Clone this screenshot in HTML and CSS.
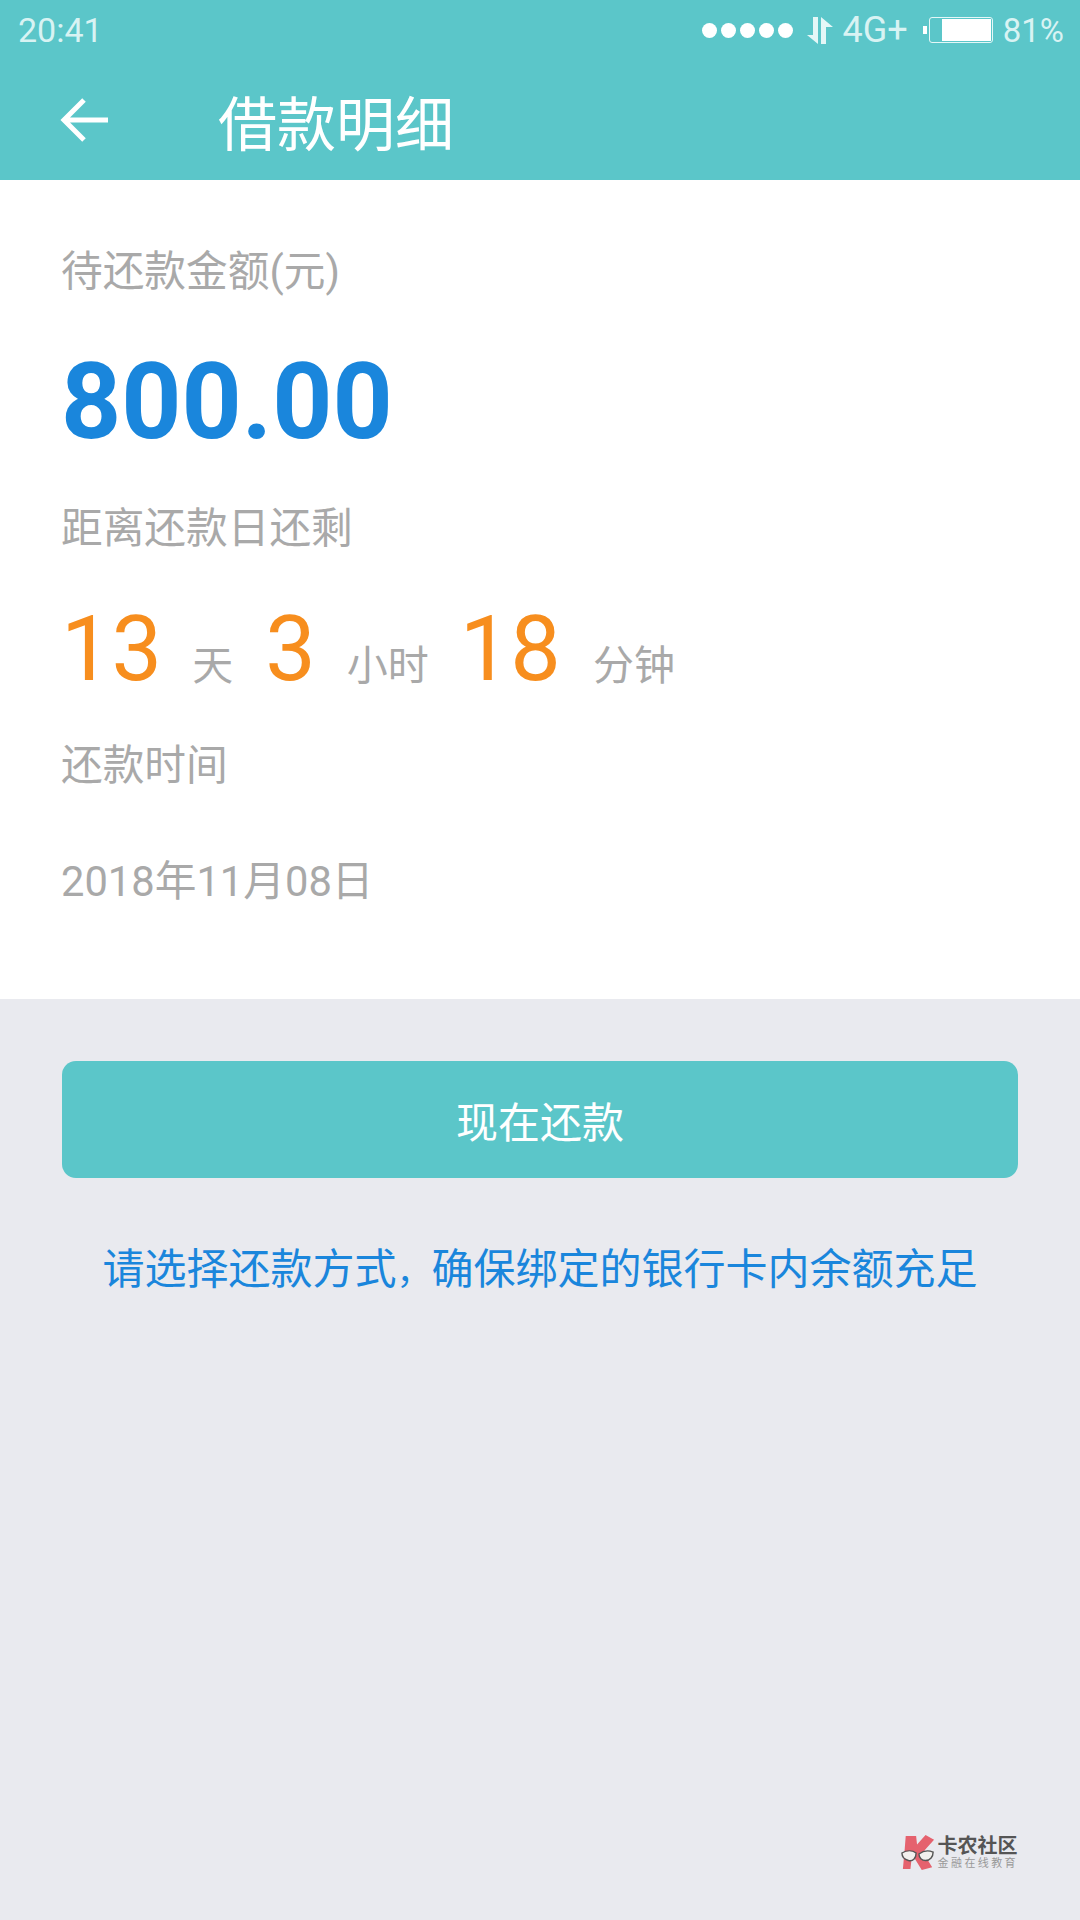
FILE: index.html
```html
<!DOCTYPE html>
<html lang="zh">

<head>
    <meta charset="UTF-8" />
    <title>借款明细</title>
    <link rel="stylesheet" href="styles.css">
</head>

<body>
    <div class="app">
        <div class="header">
            <div class="status-bar">
                <span class="time">20:41</span>
                <div class="status-right">
                    <div class="signal">
                        <i></i><i></i><i></i><i></i><i></i>
                    </div>
                    <svg class="data-icon" width="28" height="30" viewBox="0 0 28 30">
                        <path d="M1 20h6V2h5v27z" fill="#e4f7f7" />
                        <path d="M15 2v27h5V12h7z" fill="#e4f7f7" />
                    </svg>
                    <span class="net">4G+</span>
                    <div class="battery">
                        <div class="battery-tip"></div>
                        <div class="battery-body">
                            <div class="battery-level"></div>
                        </div>
                    </div>
                    <span class="percent">81%</span>
                </div>
            </div>
            <div class="toolbar">
                <svg class="back" width="50" height="50" viewBox="0 0 50 50">
                    <path d="M48 25H5M24 5L4 25l20 20" fill="none" stroke="#fff" stroke-width="5" />
                </svg>
                <h1 class="title">借款明细</h1>
            </div>
        </div>

        <div class="card">
            <div class="label label-amount">待还款金额(元)</div>
            <div class="amount">800.00</div>
            <div class="label label-left">距离还款日还剩</div>
            <div class="countdown">
                <span class="num">13</span>
                <span class="unit unit-days">天</span>
                <span class="num">3</span>
                <span class="unit unit-hours">小时</span>
                <span class="num">18</span>
                <span class="unit unit-mins">分钟</span>
            </div>
            <div class="label label-time">还款时间</div>
            <div class="label label-date">2018年11月08日</div>
        </div>

        <div class="lower">
            <button class="repay">现在还款</button>
            <p class="tip">请选择还款方式<span class="comma">，</span>确保绑定的银行卡内余额充足</p>
            <div class="watermark">
                <svg class="wm-logo" width="34" height="36" viewBox="0 0 36 38">
                    <path d="M5 1h11l1 9 9-10 9 5-10 11 0 5 8 13-11 3-8-13-3 3-1 9-8 0 2-22z" fill="#e5626e" />
                    <path d="M1 19c5-3 11-3 15 0 0 5-3 9-8 8-4-1-7-4-7-8z" fill="#f2f0ee" stroke="#555" stroke-width="1.5" />
                    <path d="M19 20c4-3 10-4 15-2 0 5-3 9-8 9-4 0-7-3-7-7z" fill="#f2f0ee" stroke="#555" stroke-width="1.5" />
                </svg>
                <div class="wm-text">
                    <div class="wm-name">卡农社区</div>
                    <div class="wm-sub">金融在线教育</div>
                </div>
            </div>
        </div>
    </div>
</body>

</html>
```

FILE: styles.css
```css
* {
    box-sizing: border-box;
}

html,
body {
    margin: 0;
    padding: 0;
}

body {
    font-family: Roboto, "Noto Sans CJK SC", sans-serif;
    background-color: #e9eaef;
    color: #a9a9a9;
}

.app {
    width: 1080px;
    height: 1920px;
    display: flex;
    flex-direction: column;
}

.header {
    height: 180px;
    background-color: #5bc6c9;
    color: #fff;
}

.status-bar {
    height: 60px;
    padding: 0 16px 0 18px;
    display: flex;
    align-items: center;
    justify-content: space-between;
    color: #d8f3f3;
    font-size: 34px;
}

.status-right {
    display: flex;
    align-items: center;
}

.signal {
    display: flex;
    gap: 4px;
    margin-right: 13px;
}

.signal i {
    width: 15px;
    height: 15px;
    border-radius: 50%;
    background-color: #fff;
}

.data-icon {
    margin-right: 9px;
}

.net {
    font-size: 36px;
    margin-right: 15px;
}

.battery {
    display: flex;
    align-items: center;
    margin-right: 10px;
}

.battery-tip {
    width: 4px;
    height: 8px;
    background-color: #fff;
    margin-right: 2px;
}

.battery-body {
    width: 64px;
    height: 26px;
    border: 1px solid #e4f7f7;
    border-radius: 3px;
    padding: 1px;
    display: flex;
    justify-content: flex-end;
}

.battery-level {
    width: 49px;
    background-color: #fff;
}

.percent {
    font-size: 33px;
}

.toolbar {
    height: 120px;
    padding-left: 60px;
    display: flex;
    align-items: center;
}

.back {
    margin-right: 108px;
}

.title {
    margin: 0;
    font-size: 59px;
    font-weight: 400;
}

.card {
    height: 819px;
    padding: 0 61px;
    background-color: #fff;
}

.label {
    font-size: 41.7px;
    line-height: 48px;
}

.label-amount {
    padding-top: 68px;
}

.amount {
    margin-top: 47px;
    font-size: 105px;
    line-height: 120px;
    font-weight: 700;
    color: #1a86dc;
}

.label-left {
    margin-top: 42px;
}

.countdown {
    margin-top: 47px;
    height: 100px;
    display: flex;
    align-items: baseline;
    font-size: 41px;
}

.num {
    font-size: 90px;
    line-height: 100px;
    color: #f78e1e;
}

.unit-days {
    margin: 0 32px 0 30px;
}

.unit-hours {
    margin: 0 31px 0 31px;
}

.unit-mins {
    margin-left: 32px;
}

.label-time {
    margin-top: 42px;
}

.label-date {
    margin-top: 68px;
}

.lower {
    flex: 1;
    padding: 62px 62px 0;
    position: relative;
}

.repay {
    display: block;
    width: 956px;
    height: 117px;
    padding: 0;
    border: none;
    border-radius: 14px;
    background-color: #5bc6c9;
    color: #fff;
    font-family: inherit;
    font-size: 42px;
}

.tip {
    margin: 64px 0 0;
    text-align: center;
    font-size: 42px;
    line-height: 56px;
    color: #1a86dc;
    white-space: nowrap;
}

.comma {
    font-size: 35px;
}

.watermark {
    position: absolute;
    right: 62px;
    bottom: 49px;
    display: flex;
    align-items: center;
    gap: 3px;
}

.wm-text {
    color: #555;
}

.wm-name {
    font-size: 20px;
    line-height: 22px;
    font-weight: 700;
}

.wm-sub {
    font-size: 11px;
    line-height: 14px;
    letter-spacing: 2.4px;
    color: #999;
}
```
